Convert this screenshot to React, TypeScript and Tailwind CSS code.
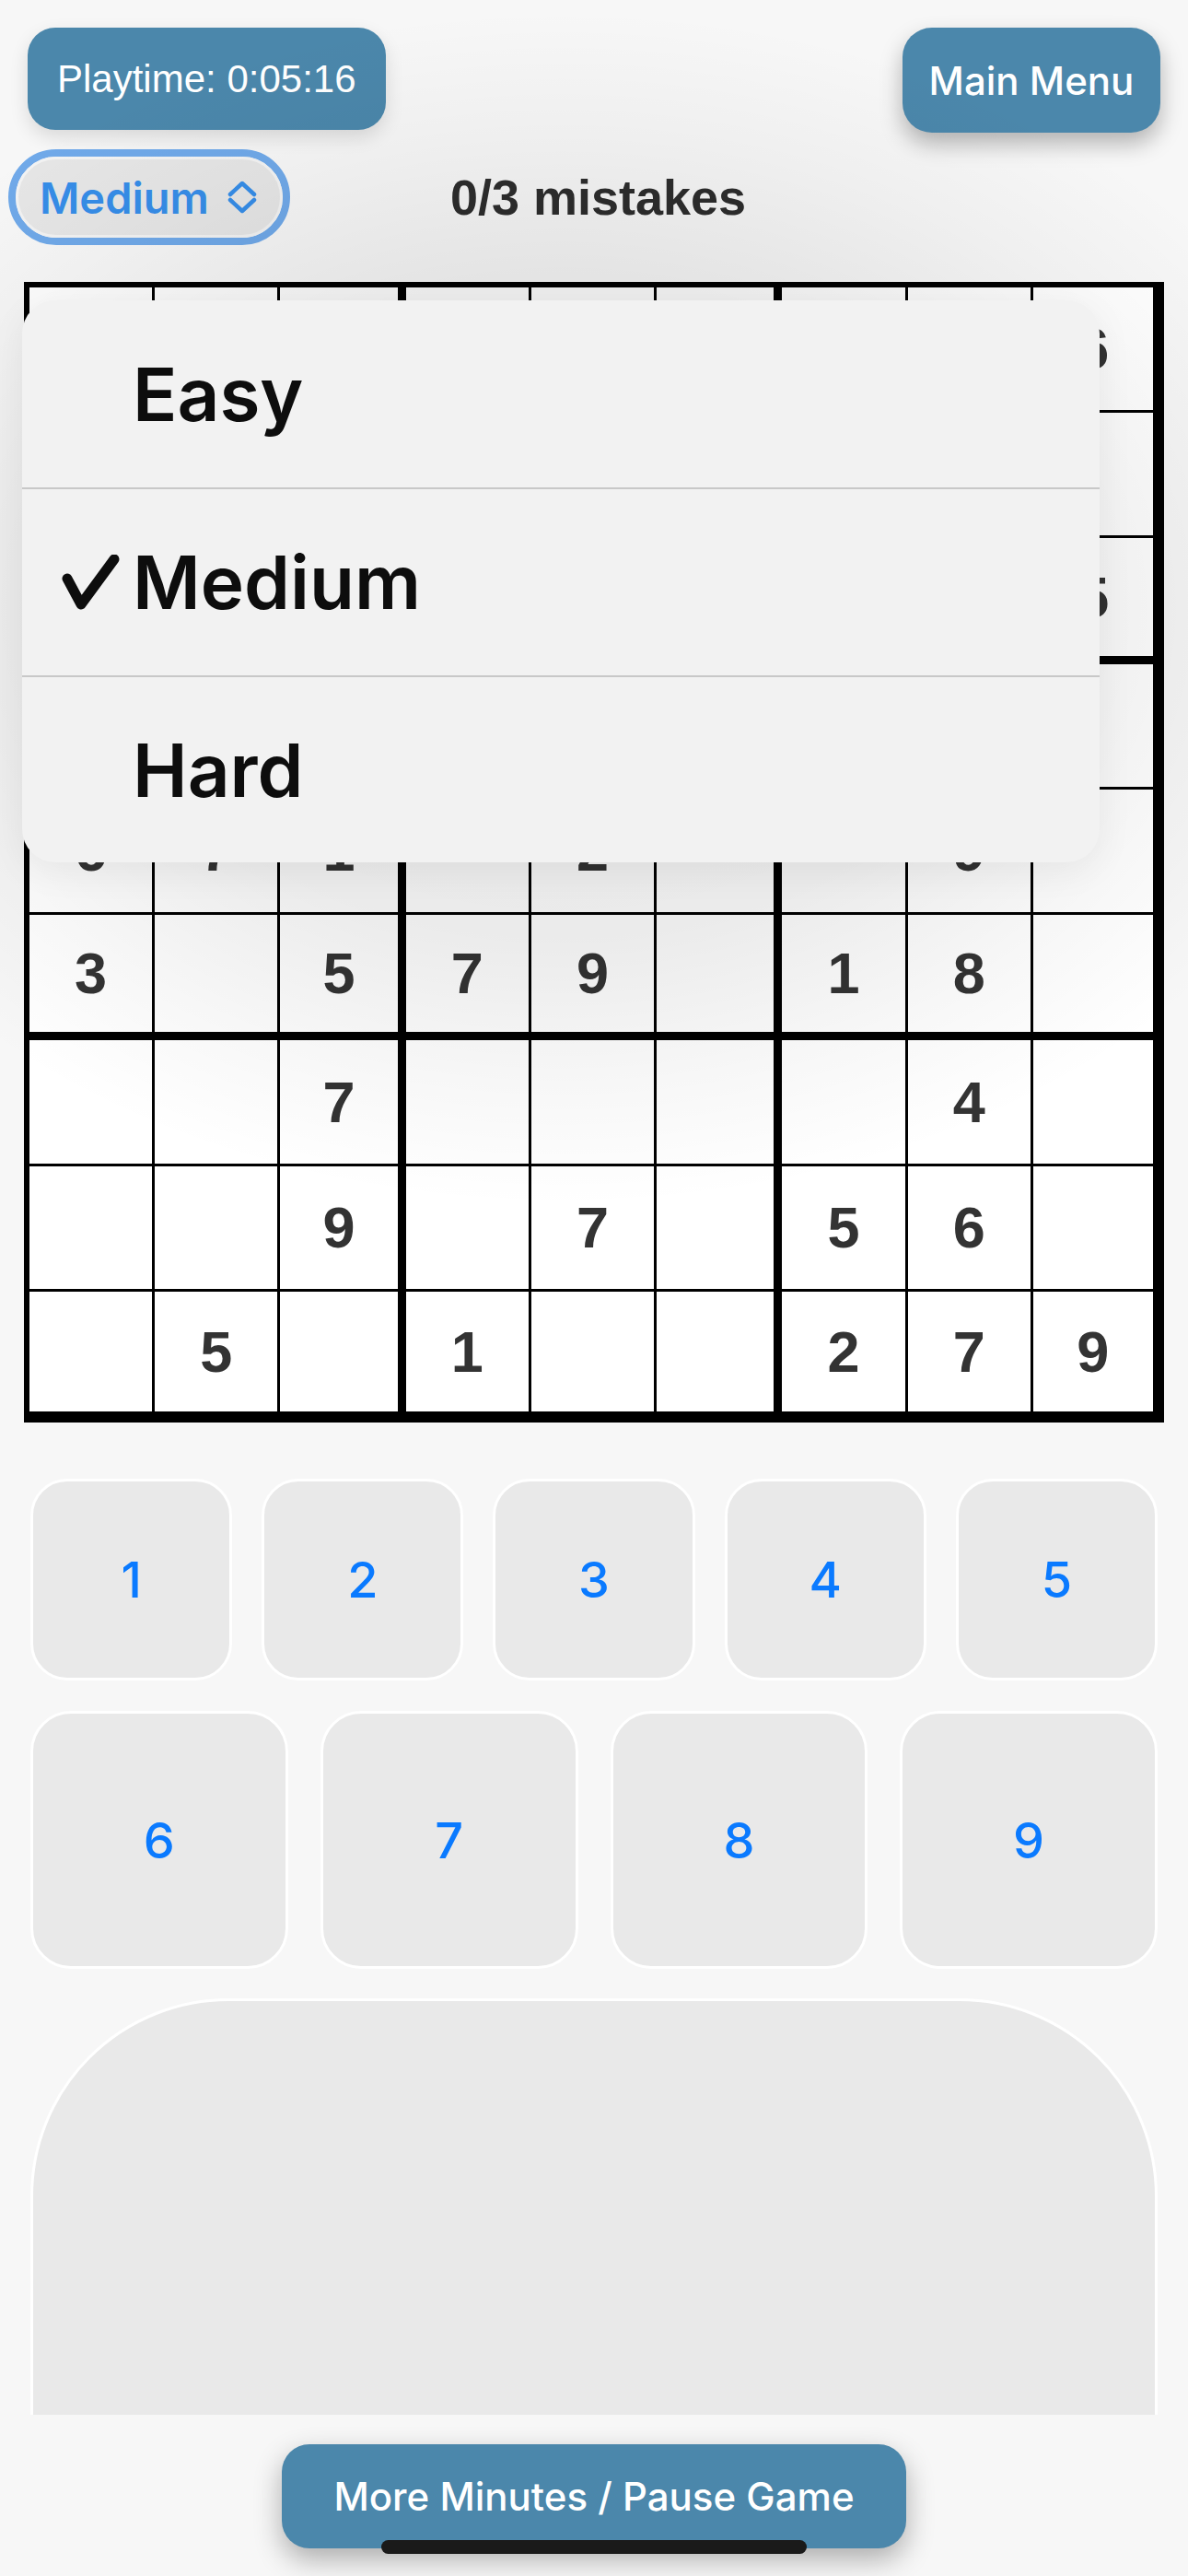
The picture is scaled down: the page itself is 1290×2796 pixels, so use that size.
import React from "react";

const board: (number | null)[][] = [
  [null, null, null, null, null, null, null, null, 6],
  [null, null, null, null, null, null, null, null, null],
  [null, null, null, null, null, null, null, null, 5],
  [null, null, null, null, null, null, null, null, null],
  [6, 7, 1, null, 2, null, null, 9, null],
  [3, null, 5, 7, 9, null, 1, 8, null],
  [null, null, 7, null, null, null, null, 4, null],
  [null, null, 9, null, 7, null, 5, 6, null],
  [null, 5, null, 1, null, null, 2, 7, 9],
];

function rightBorder(c: number) {
  if (c === 8) return "border-r-[6px]";
  if (c === 2 || c === 5) return "border-r-[9px]";
  return "border-r-[3px]";
}
function bottomBorder(r: number) {
  if (r === 8) return "border-b-[6px]";
  if (r === 2 || r === 5) return "border-b-[9px]";
  return "border-b-[3px]";
}

function ChevronsUpDown() {
  return (
    <svg width="32" height="36" viewBox="0 0 32 36" fill="none" stroke="currentColor" strokeWidth="4.5" strokeLinecap="round" strokeLinejoin="round">
      <path d="M3 15 L16 3 L29 15" />
      <path d="M3 21 L16 33 L29 21" />
    </svg>
  );
}

function Check() {
  return (
    <svg width="64" height="60" viewBox="0 0 64 60" fill="none" stroke="#0d0d0d" strokeWidth="11" strokeLinecap="round" strokeLinejoin="round">
      <path d="M7 26 L22 54 L58 5" />
    </svg>
  );
}

export default function App() {
  const sys = { fontFamily: "Inter, 'Noto Sans', sans-serif" } as React.CSSProperties;
  return (
    <div className="relative w-[1290px] h-[2796px] bg-[#f7f7f7] overflow-hidden flex flex-col">
      <div className="h-[2621px] shrink-0 overflow-hidden flex flex-col">
        {/* top row */}
        <div className="flex justify-between items-start px-[30px] pt-[30px]">
          <div className="h-[111px] px-[32px] rounded-[30px] bg-[#4b87ab] text-white text-[42px] flex items-center shadow-[0_8px_20px_rgba(0,0,0,0.12)] font-['Liberation_Sans',Arial,sans-serif]">
            Playtime: 0:05:16
          </div>
          <div className="h-[114px] w-[280px] rounded-[32px] bg-[#4b87ab] text-white text-[42px] font-medium flex items-center justify-center shadow-[0_12px_24px_rgba(0,0,0,0.28)] font-['Inter',sans-serif]">
            Main Menu
          </div>
        </div>

        {/* second row */}
        <div className="grid grid-cols-[1fr_auto_1fr] items-center mt-[18px] pl-[9px]">
          <div className="justify-self-start h-[104px] w-[306px] rounded-full border-[8px] border-[#70a9e9]">
            <div className="h-full w-full rounded-full border-[3px] border-[#f3f3f3] bg-[#e6e6e6] flex items-center pl-[23px] gap-[20px] text-[#368de8]">
              <span className="text-[47px] font-semibold leading-none font-['Inter',sans-serif]">Medium</span>
              <ChevronsUpDown />
            </div>
          </div>
          <div className="text-[54px] font-bold text-[#2d2d2d] leading-none font-['Liberation_Sans',Arial,sans-serif]">
            0/3 mistakes
          </div>
          <div />
        </div>

        {/* board */}
        <div className="mt-[40px] ml-[26px] w-[1238px] h-[1238px] shrink-0 border-[6px] border-black bg-white grid grid-cols-9 grid-rows-9">
          {board.map((row, r) =>
            row.map((v, c) => (
              <div
                key={`${r}-${c}`}
                className={`${rightBorder(c)} ${bottomBorder(r)} border-black flex items-center justify-center text-[63px] font-bold text-[#333333] font-['Liberation_Sans',Arial,sans-serif]`}
              >
                {v ?? ""}
              </div>
            ))
          )}
        </div>

        {/* number pad */}
        <div className="mt-[61px] mx-[33px] flex flex-col gap-[33px]">
          <div className="grid grid-cols-5 gap-[32px]">
            {[1, 2, 3, 4, 5].map((n) => (
              <div key={n} className="aspect-square rounded-[40px] border-[3px] border-white bg-[#e9e9e9] flex items-center justify-center text-[54px] font-medium text-[#0a7aff]" style={sys}>
                {n}
              </div>
            ))}
          </div>
          <div className="grid grid-cols-4 gap-[35px]">
            {[6, 7, 8, 9].map((n) => (
              <div key={n} className="aspect-square rounded-[44px] border-[3px] border-white bg-[#e9e9e9] flex items-center justify-center text-[54px] font-medium text-[#0a7aff]" style={sys}>
                {n}
              </div>
            ))}
          </div>
        </div>

        {/* big panel */}
        <div className="mt-[32px] mx-[33px] shrink-0 aspect-square rounded-[215px] border-[3px] border-white bg-[#e9e9e9]" />
      </div>

      {/* bottom bar */}
      <div className="flex justify-center pt-[32px]">
        <div className="w-[678px] h-[113px] rounded-[30px] bg-[#4b87ab] text-white text-[42px] font-medium flex items-center justify-center shadow-[0_12px_30px_rgba(0,0,0,0.3)] font-['Inter',sans-serif]">
          More Minutes / Pause Game
        </div>
      </div>

      {/* soft shade cast by the open menu */}
      <div className="absolute inset-0 z-[5] pointer-events-none bg-[radial-gradient(ellipse_900px_650px_at_610px_660px,rgba(0,0,0,0.10)_0%,rgba(0,0,0,0.08)_55%,rgba(0,0,0,0.03)_80%,rgba(0,0,0,0)_100%)]" />

      {/* dropdown menu overlay */}
      <div className="absolute left-[24px] top-[326px] w-[1170px] h-[610px] rounded-[36px] bg-[#f2f2f2] z-10 shadow-[0_10px_40px_rgba(0,0,0,0.06)] flex flex-col overflow-hidden font-['Inter',sans-serif] text-[#0d0d0d]">
        <div className="h-[203px] flex items-center pl-[42px]">
          <div className="w-[78px]" />
          <span className="text-[80px] font-semibold leading-none">Easy</span>
        </div>
        <div className="h-[2px] bg-[#c8c8c8]" />
        <div className="h-[202px] flex items-center pl-[42px]">
          <div className="w-[78px] flex items-center"><Check /></div>
          <span className="text-[80px] font-semibold leading-none">Medium</span>
        </div>
        <div className="h-[2px] bg-[#c8c8c8]" />
        <div className="flex-1 flex items-center pl-[42px]">
          <div className="w-[78px]" />
          <span className="text-[80px] font-semibold leading-none">Hard</span>
        </div>
      </div>

      {/* home indicator */}
      <div className="absolute left-[414px] top-[2757px] w-[462px] h-[15px] rounded-full bg-[#1a1a1a] z-20" />
    </div>
  );
}
